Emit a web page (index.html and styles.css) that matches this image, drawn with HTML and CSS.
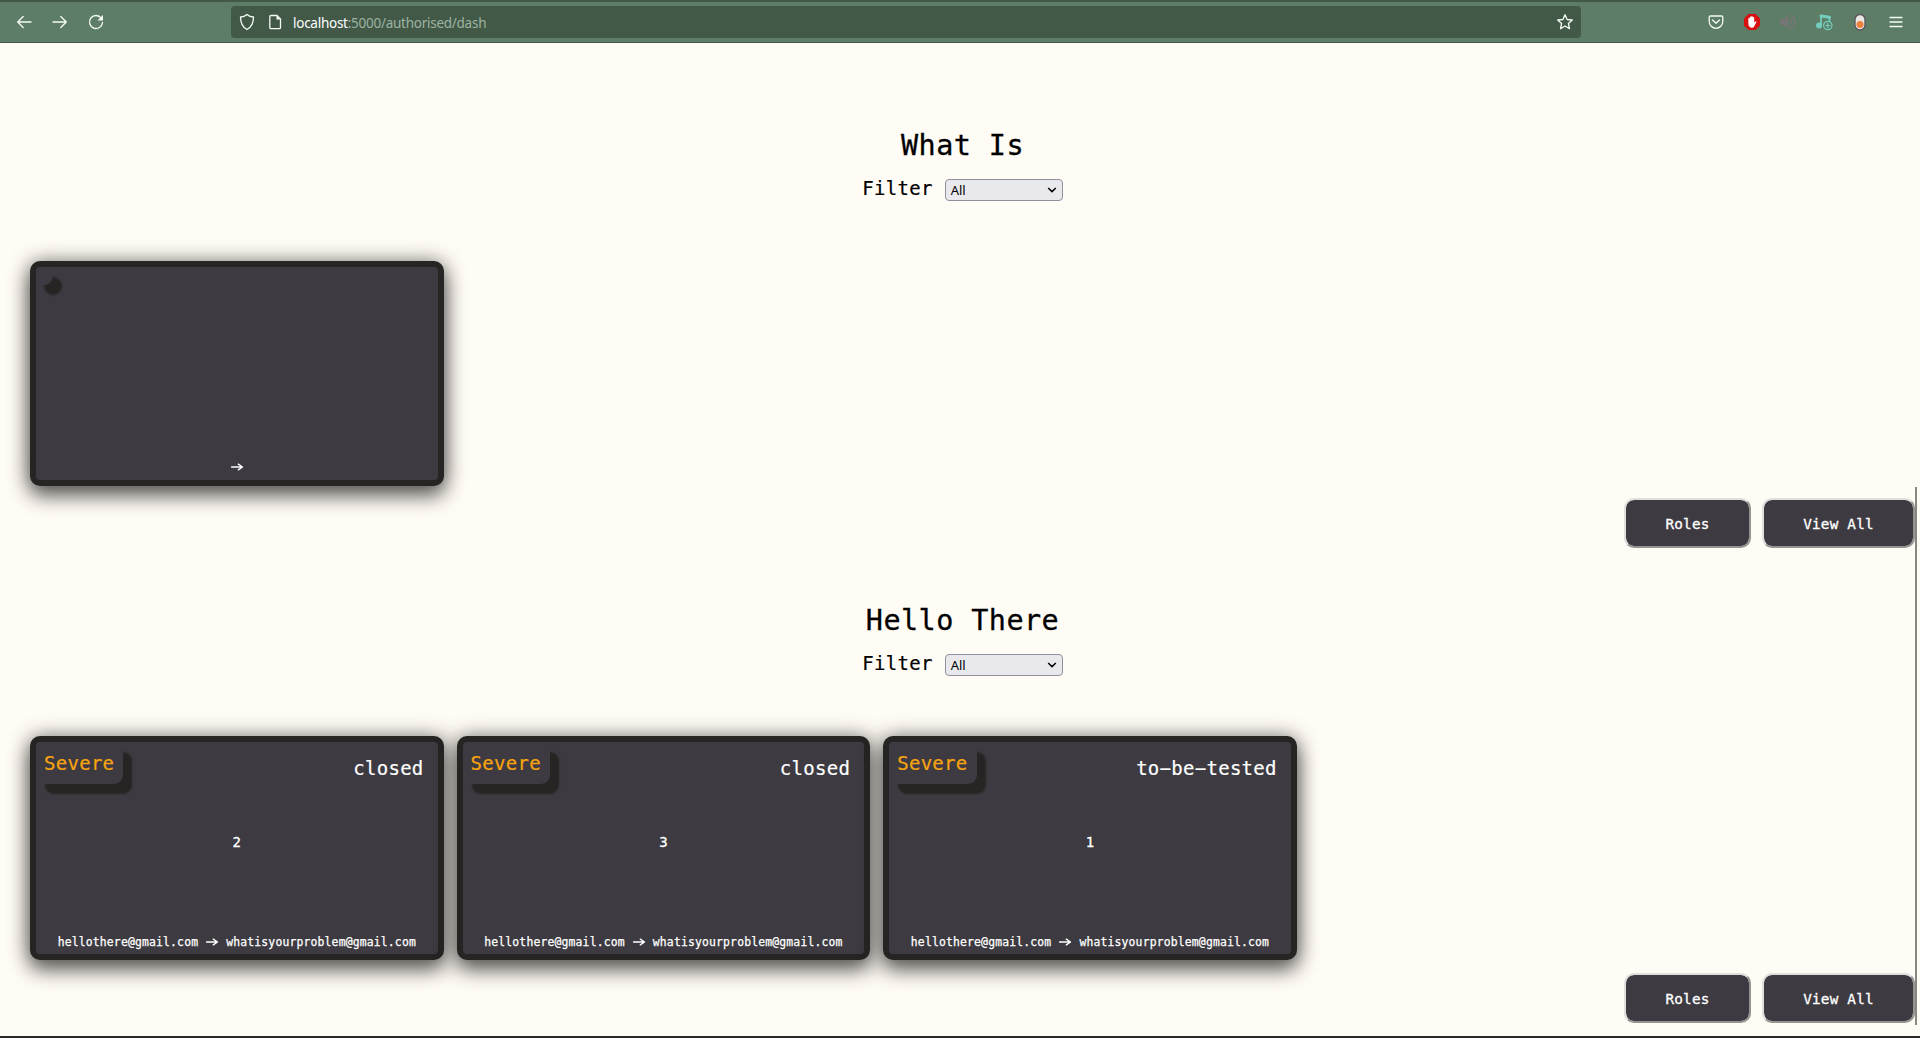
FILE: index.html
```html
<!DOCTYPE html>
<html lang="en">
<head>
<meta charset="utf-8">
<title>Dashboard</title>
<link rel="stylesheet" href="styles.css">
</head>
<body>
<svg width="0" height="0" class="defs">
  <symbol id="arrow" viewBox="0 0 14 10"><path d="M1.600 5H12M8.300 2.200L12.500 5 8.300 7.800" fill="none" stroke="#fff" stroke-width="1.400" stroke-linecap="round" stroke-linejoin="round"/></symbol>
</svg>
<header class="toolbar">
  <nav class="nav">
    <svg width="16" height="16" viewBox="0 0 16 16"><path d="M15 8H2M7.200 2.500L1.700 8l5.500 5.500"/></svg>
    <svg width="16" height="16" viewBox="0 0 16 16"><path d="M1 8h13M8.800 2.500L14.300 8l-5.500 5.500"/></svg>
    <svg width="16" height="16" viewBox="0 0 16 16"><path d="M13.300 4.200A6.500 6.500 0 1 0 14.500 8.500"/><path class="solid" d="M15 1v5.500H9.500z"/></svg>
  </nav>
  <div class="urlbar">
    <svg width="16" height="18" viewBox="0 0 16 18"><path d="M8 1.500C6 3.200 3.500 3.900 1.500 4c0 5 .8 9.500 6.500 12.500C13.700 13.500 14.500 9 14.500 4 12.500 3.900 10 3.200 8 1.500z"/></svg>
    <svg class="page" width="14" height="16" viewBox="0 0 14 16"><path d="M3 1.500h6L12.500 5v8.500a1.200 1.200 0 0 1-1.200 1.200H3a1.200 1.200 0 0 1-1.200-1.200v-10.800A1.200 1.200 0 0 1 3 1.500z"/><path class="solid" d="M8.500 1.500V5.500h4z"/></svg>
    <span class="url"><b>localhost</b>:5000/authorised/dash</span>
    <svg class="star" width="18" height="18" viewBox="0 0 18 18"><path d="M9 1.700l2.100 4.800 5.200.5-3.900 3.500 1.100 5.200L9 13l-4.500 2.700 1.100-5.200L1.700 7l5.200-.5z"/></svg>
  </div>
  <div class="tools">
    <svg width="18" height="18" viewBox="0 0 18 18"><path d="M3.500 3h11a1.300 1.300 0 0 1 1.300 1.300V8.500a6.800 6.800 0 0 1-13.600 0V4.300A1.300 1.300 0 0 1 3.500 3zM5.500 7L9 10.300 12.500 7"/></svg>
    <svg width="18" height="18" viewBox="0 0 18 18"><path fill="#d8100f" stroke="none" d="M5.500 1h7L17 5.500v7L12.500 17h-7L1 12.500v-7z"/><path fill="#fff" stroke="none" d="M5.300 9.500V5.500q.7-1 1.400 0V4q.7-1 1.500 0V3.500q.7-1 1.500 0V4.500q.7-1 1.500 0V9.500l1-1q1.200-.5 1.200.4l-2 4Q10.500 15 8.500 14.700 5.300 14.200 5.300 9.500z"/></svg>
    <svg width="18" height="18" viewBox="0 0 18 18"><g class="speaker"><path class="cone" d="M1 6h3.500L9 2v14l-4.500-4H1z"/><path d="M11 6q2 3 0 6M11.500 2.500c6 2.500 6 10.500 0 13"/></g></svg>
    <svg width="18" height="18" viewBox="0 0 18 18"><g class="note"><path d="M6 12.500V3l8.500 1.300v3"/><path class="beam" d="M6 3l8.500 1.300"/><circle class="dot" cx="4" cy="12.500" r="3"/><circle class="plus" cx="12.800" cy="12.500" r="4.200"/><path class="plus" d="M12.800 10.300v4.400M10.600 12.500h4.400"/></g></svg>
    <svg width="18" height="18" viewBox="0 0 18 18"><rect class="pill" x="4" y="1.500" width="10" height="15.500" rx="5"/><circle cx="9" cy="11.500" r="3.500" fill="#ed8139" stroke="none"/></svg>
    <svg width="18" height="18" viewBox="0 0 18 18"><path d="M3 4.500h12M3 9h12M3 13.500h12"/></svg>
  </div>
</header>

<main class="board">
  <section class="project">
    <h1>What Is</h1>
    <div class="filter"><span class="label">Filter</span><span class="select">All<svg width="10" height="6" viewBox="0 0 10 6"><path d="M1.200 1L5 4.600 8.800 1"/></svg></span></div>
    <div class="cards">
      <article class="card blank">
        <div class="top"><span class="severity"></span></div>
        <div class="mail"><svg width="14" height="10"><use href="#arrow"/></svg></div>
      </article>
    </div>
    <div class="actions"><button>Roles</button><button>View All</button></div>
  </section>

  <section class="project">
    <h1>Hello There</h1>
    <div class="filter"><span class="label">Filter</span><span class="select">All<svg width="10" height="6" viewBox="0 0 10 6"><path d="M1.200 1L5 4.600 8.800 1"/></svg></span></div>
    <div class="cards">
      <article class="card">
        <div class="top"><span class="severity">Severe</span><span class="status">closed</span></div>
        <div class="count">2</div>
        <div class="mail"><span>hellothere@gmail.com</span><svg width="14" height="10"><use href="#arrow"/></svg><span>whatisyourproblem@gmail.com</span></div>
      </article>
      <article class="card">
        <div class="top"><span class="severity">Severe</span><span class="status">closed</span></div>
        <div class="count">3</div>
        <div class="mail"><span>hellothere@gmail.com</span><svg width="14" height="10"><use href="#arrow"/></svg><span>whatisyourproblem@gmail.com</span></div>
      </article>
      <article class="card">
        <div class="top"><span class="severity">Severe</span><span class="status">to−be−tested</span></div>
        <div class="count">1</div>
        <div class="mail"><span>hellothere@gmail.com</span><svg width="14" height="10"><use href="#arrow"/></svg><span>whatisyourproblem@gmail.com</span></div>
      </article>
    </div>
    <div class="actions"><button>Roles</button><button>View All</button></div>
  </section>
  <div class="scrollbar"></div>
</main>
</body>
</html>
```

FILE: styles.css
```css
* { box-sizing: border-box; }
body {
  margin: 0;
  height: 1038px;
  overflow: hidden;
  display: flex;
  flex-direction: column;
  background: #fffbf5;
  border-bottom: 2px solid #2b2a28;
  font-family: "DejaVu Sans Mono", monospace;
}
.defs { position: absolute; }

/* browser toolbar */
.toolbar {
  height: 43px;
  flex: none;
  display: flex;
  align-items: center;
  background: #5e7d66;
  border-top: 2px solid #425948;
  border-bottom: 1px solid #425948;
}
.toolbar svg { fill: none; stroke: #f4fbf5; stroke-width: 1.3; stroke-linecap: round; stroke-linejoin: round; flex: none; }
.toolbar .solid { fill: #f4fbf5; stroke: none; }
.speaker { stroke: #767676; stroke-width: 1.7; }
.speaker .cone { fill: #767676; stroke: none; }
.note { stroke: #72cdbd; stroke-width: 1.8; }
.note .beam { stroke-width: 3; }
.note .dot { fill: #72cdbd; stroke: none; }
.note .plus { fill: #5e7d66; stroke-width: 1.2; }
.pill { fill: #e9e6e4; stroke: #56545a; }
.nav { display: flex; gap: 20px; width: 231px; padding-left: 16px; }
.urlbar {
  width: 1350px;
  height: 32px;
  margin-top: 2px;
  margin-bottom: 2px;
  padding: 0 7px 0 8px;
  display: flex;
  align-items: center;
  background: #425948;
  border-radius: 4px;
}
.page { margin-left: 13px; }
.url {
  margin-left: 11px;
  flex: 1;
  font: 13.5px "Noto Sans", sans-serif;
  letter-spacing: -0.26px;
  color: #9db3a1;
  padding-top: 2px;
}
.url b { font-weight: 400; color: #fff; }
.tools { flex: 1; display: flex; justify-content: flex-end; gap: 18px; padding-right: 15px; }

/* project boards */
.board { flex: 1; min-height: 0; padding-top: 77px; position: relative; }
.project { height: 475px; }
h1 {
  margin: 0;
  height: 48px;
  padding-top: 2px;
  line-height: 48px;
  padding-left: 5px;
  font-size: 28.5px;
  font-weight: 400;
  letter-spacing: 0.42px;
  text-align: center;
  color: #000;
  -webkit-text-stroke: .3px #000;
}
.filter { display: flex; justify-content: center; align-items: center; height: 44px; padding-left: 5px; }
.label { font-size: 19px; letter-spacing: 0.28px; color: #000; margin-right: 12px; padding-bottom: 4px; -webkit-text-stroke: .2px #000; }
.select {
  width: 118px;
  height: 22px;
  padding: 0 5px 0 5px;
  display: flex;
  align-items: center;
  justify-content: space-between;
  border: 1px solid #8f8f9d;
  border-radius: 4px;
  background: #e9e9ed;
  font: 13px "Noto Sans", sans-serif;
  color: #000;
}
.select svg { fill: none; stroke: #000; stroke-width: 1.5; }
.cards { display: flex; gap: 13px; padding: 49px 30px 0; height: 274px; align-items: flex-start; }
.card {
  width: 413.6px;
  height: 224px;
  display: grid;
  grid-template-rows: 85px 1fr 24px;
  border: 6px solid #262523;
  border-radius: 10px;
  background: #3d3b41;
  box-shadow: 0 10px 20px rgba(38, 37, 35, .65), 0 0 20px rgba(38, 37, 35, .5);
  color: #fff;
}
.card.blank { height: 225px; grid-template-rows: 85px 1fr 27px; }
.top { display: flex; justify-content: space-between; align-items: flex-start; }
.severity {
  min-width: 18px;
  min-height: 18px;
  padding: 9px 9px 9px 8px;
  line-height: 24px;
  font-size: 19px;
  letter-spacing: 0.28px;
  color: #f8a410;
  border-radius: 0 0 9px 9px;
  border-radius: 9px;
  box-shadow: 9px 10px 2px #262523;
  -webkit-text-stroke: .2px #f8a410;
}
.severity:empty { padding: 9px; margin-left: -1px; }
.status { padding: 14px 14px 0 0; font-size: 19px; line-height: 24px; letter-spacing: 0.28px; -webkit-text-stroke: .2px #fff; }
.count { text-align: center; font-size: 14px; line-height: 30px; -webkit-text-stroke: .3px #fff; }
.mail { grid-row: 3; display: flex; justify-content: center; align-items: center; gap: 7px; font-size: 11.4px; letter-spacing: 0.17px; -webkit-text-stroke: .25px #fff; }
.mail svg { flex: none; }
.actions { display: flex; justify-content: flex-end; gap: 11px; padding: 12px 5px 0 0; }
.actions button {
  width: 127px;
  height: 50px;
  padding: 2px 0 0;
  border: 2px solid;
  border-color: #e0dfdd #969391 #969391 #e0dfdd;
  border-radius: 10px;
  background: #3d3b41;
  background-clip: padding-box;
  color: #fff;
  font: 14.3px "DejaVu Sans Mono", monospace;
  letter-spacing: 0.22px;
  -webkit-text-stroke: .3px #fff;
}
.actions button:last-child { width: 153px; }
.scrollbar { position: absolute; top: 444px; right: 3px; width: 2px; height: 538px; background: #8a8783; }
```
